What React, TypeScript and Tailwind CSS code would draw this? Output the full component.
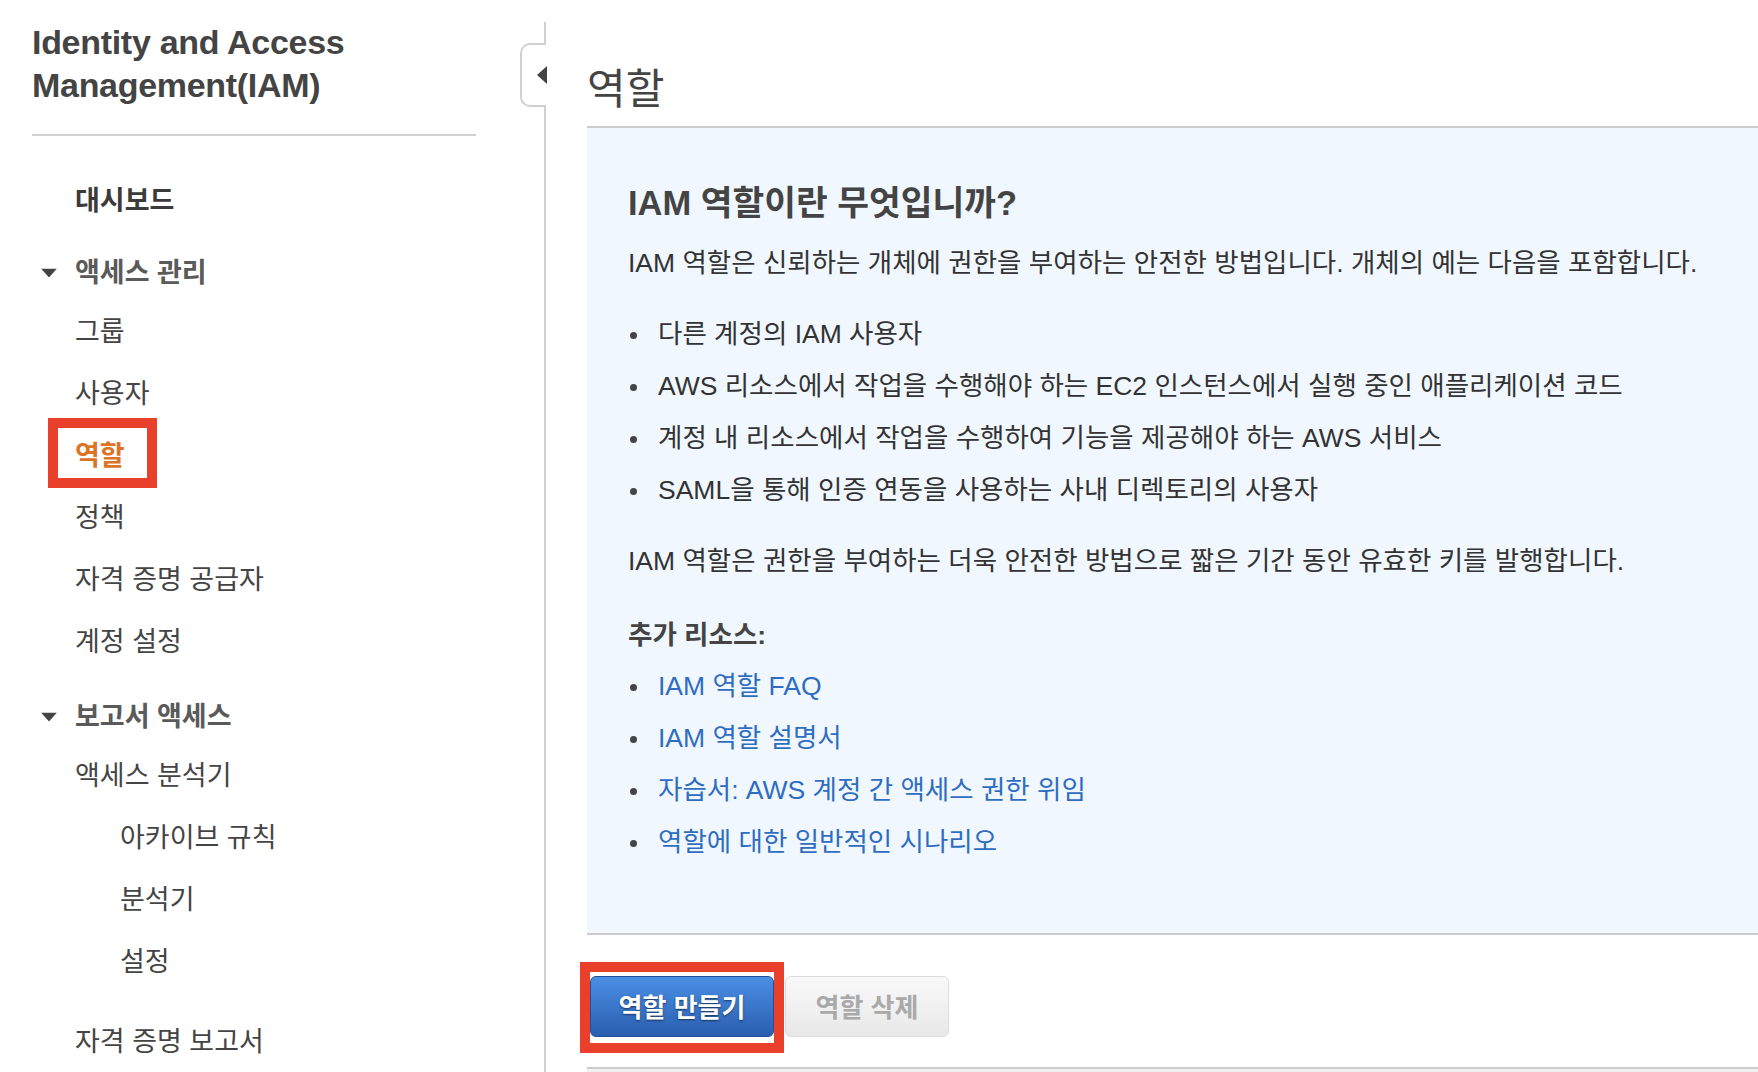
import React from "react";

type NavItem = {
  label: string;
  kind?: "head" | "section" | "active";
  indent?: boolean;
  gap?: string;
};

const navItems: NavItem[] = [
  { label: "대시보드", kind: "head" },
  { label: "액세스 관리", kind: "section", gap: "mt-[13px]" },
  { label: "그룹" },
  { label: "사용자" },
  { label: "역할", kind: "active" },
  { label: "정책" },
  { label: "자격 증명 공급자" },
  { label: "계정 설정" },
  { label: "보고서 액세스", kind: "section", gap: "mt-[16px]" },
  { label: "액세스 분석기" },
  { label: "아카이브 규칙", indent: true },
  { label: "분석기", indent: true },
  { label: "설정", indent: true },
  { label: "자격 증명 보고서", gap: "mt-[18px]" },
];

const bullets = [
  "다른 계정의 IAM 사용자",
  "AWS 리소스에서 작업을 수행해야 하는 EC2 인스턴스에서 실행 중인 애플리케이션 코드",
  "계정 내 리소스에서 작업을 수행하여 기능을 제공해야 하는 AWS 서비스",
  "SAML을 통해 인증 연동을 사용하는 사내 디렉토리의 사용자",
];

const links = [
  "IAM 역할 FAQ",
  "IAM 역할 설명서",
  "자습서: AWS 계정 간 액세스 권한 위임",
  "역할에 대한 일반적인 시나리오",
];

function DownArrow() {
  return (
    <svg width="16" height="9" viewBox="0 0 16 9" className="absolute left-[-34px] top-1/2 -translate-y-1/2">
      <path d="M0 0 H16 L8 9 Z" fill="#444" />
    </svg>
  );
}

function Sidebar() {
  return (
    <aside className="w-[544px] shrink-0 pl-[32px] pr-[68px]">
      <h1 className="pt-[21px] text-[34px] font-bold leading-[43px] tracking-[-0.3px] text-[#444]">
        Identity and Access
        <br />
        Management(IAM)
      </h1>
      <div className="mt-[27px] h-[2px] bg-[#d0d0d0]" />

      <nav className="mt-[34px] flex flex-col">
        {navItems.map((item) => {
          const height = item.kind === "section" ? "h-[56px]" : "h-[62px]";
          const pad = item.indent ? "pl-[88px]" : "pl-[43px]";
          let text = "text-[#444]";
          if (item.kind === "head") text = "font-bold text-[#3b3b3b]";
          if (item.kind === "section") text = "font-bold text-[#5a5a5a]";
          if (item.kind === "active") text = "font-bold text-[#dc7426]";
          return (
            <div key={item.label} className={`flex items-center ${height} ${pad} ${item.gap ?? ""}`}>
              <span className={`relative text-[27px] leading-none ${text}`}>
                {item.kind === "section" && <DownArrow />}
                {item.label}
                {item.kind === "active" && (
                  <span className="absolute left-[-27px] top-[-25px] h-[70px] w-[109px] border-[10px] border-[#e8402a]" />
                )}
              </span>
            </div>
          );
        })}
      </nav>
    </aside>
  );
}

function Bullet({ children, link }: { children: React.ReactNode; link?: boolean }) {
  return (
    <li className="flex h-[40px] items-center">
      <span className="ml-[2px] h-[7px] w-[7px] rounded-full bg-[#444]" />
      <span className={`ml-[21px] ${link ? "text-[#2f6dc2]" : "text-[#333]"}`}>{children}</span>
    </li>
  );
}

export default function App() {
  return (
    <div className="h-[1072px] w-full overflow-hidden bg-white font-['Liberation_Sans','Noto_Sans_CJK_KR',sans-serif]">
      <div className="flex h-full">
        <Sidebar />

        <div className="relative mt-[22px] w-[2px] shrink-0 bg-[#d0d0d0]">
          <div className="absolute right-0 top-[21px] flex h-[64px] w-[26px] items-center justify-end rounded-l-[10px] border-y-2 border-l-2 border-[#d0d0d0] bg-white">
            <svg width="10" height="18" viewBox="0 0 10 18" className="mr-[-1px]">
              <path d="M10 0 V18 L0 9 Z" fill="#444" />
            </svg>
          </div>
        </div>

        <main className="flex min-w-0 flex-1 flex-col pl-[41px]">
          <div className="h-[126px] pt-[64px]">
            <h2 className="text-[42px] leading-[52px] text-[#444]">역할</h2>
          </div>

          <section className="border-y-2 border-[#cccccc] bg-[#f0f7fe] pb-[70px] pl-[41px] pt-[55px] text-[26.5px]">
            <h3 className="text-[34.5px] font-bold leading-[40px] text-[#444]">IAM 역할이란 무엇입니까?</h3>
            <p className="mt-[20px] leading-[40px] text-[#333]">
              IAM 역할은 신뢰하는 개체에 권한을 부여하는 안전한 방법입니다. 개체의 예는 다음을 포함합니다.
            </p>
            <ul className="mt-[32px] flex flex-col gap-[12px]">
              {bullets.map((b) => (
                <Bullet key={b}>{b}</Bullet>
              ))}
            </ul>
            <p className="mt-[30px] leading-[40px] text-[#333]">
              IAM 역할은 권한을 부여하는 더욱 안전한 방법으로 짧은 기간 동안 유효한 키를 발행합니다.
            </p>
            <p className="mt-[34px] font-bold leading-[40px] text-[#444]">추가 리소스:</p>
            <ul className="mt-[12px] flex flex-col gap-[12px]">
              {links.map((l) => (
                <Bullet key={l} link>
                  {l}
                </Bullet>
              ))}
            </ul>
          </section>

          <div className="ml-[3px] mt-[41px] flex gap-[11px]">
            <div className="relative">
              <button className="h-[61px] w-[184px] rounded-[6px] border border-[#1f4e9a] bg-linear-to-b from-[#4b8fe6] to-[#2a5eae] pt-[3px] text-[26px] font-bold text-white [text-shadow:0_1px_2px_rgba(0,0,0,0.55)]">
                역할 만들기
              </button>
              <span className="absolute left-[-10px] top-[-14px] h-[91px] w-[204px] border-[10px] border-[#e8402a]" />
            </div>
            <button className="h-[61px] w-[164px] rounded-[6px] border border-[#dcdcdc] bg-linear-to-b from-[#f9f9f9] to-[#e8e8e8] pt-[3px] text-[26px] font-bold text-[#a9a9a9]">
              역할 삭제
            </button>
          </div>

          <div className="mt-[30px] h-[2px] bg-[#cccccc]" />
          <div className="flex-1 bg-[#f0f0f0]" />
        </main>
      </div>
    </div>
  );
}
